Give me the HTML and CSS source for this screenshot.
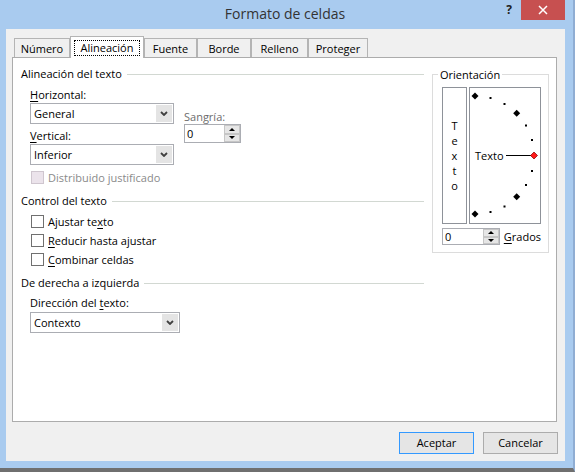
FILE: index.html
```html
<!DOCTYPE html>
<html lang="es">
<head>
<meta charset="utf-8">
<title>Formato de celdas</title>
<link rel="stylesheet" href="styles.css">
</head>
<body>
<div class="window">
  <div class="titlebar">
    <div class="title">Formato de celdas</div>
    <div class="controls">
      <div class="help">?</div>
      <div class="close"><svg width="10" height="10" viewBox="0 0 10 10"><path d="M1 1L9 9M9 1L1 9" stroke="#fff" stroke-width="1.5" fill="none"/></svg></div>
    </div>
  </div>
  <div class="frame">
    <div class="client">
      <div class="tabs">
        <div class="tab tab-numero">Número</div>
        <div class="tab tab-alin active"><span class="focus">Alineación</span></div>
        <div class="tab tab-fuente">Fuente</div>
        <div class="tab tab-borde">Borde</div>
        <div class="tab tab-relleno">Relleno</div>
        <div class="tab tab-proteger">Proteger</div>
      </div>
      <div class="panel">
        <div class="left">
          <div class="group-head">Alineación del texto</div>
          <div class="align-row">
            <div class="align-col">
              <div class="label"><u>H</u>orizontal:</div>
              <div class="select select-md">
                <span class="select-value">General</span>
                <span class="select-btn"><svg width="8" height="5" viewBox="0 0 8 5"><path d="M1 1L4 4L7 1" stroke="#404040" stroke-width="1.8" fill="none"/></svg></span>
              </div>
              <div class="label label-gap"><u>V</u>ertical:</div>
              <div class="select select-md">
                <span class="select-value">Inferior</span>
                <span class="select-btn"><svg width="8" height="5" viewBox="0 0 8 5"><path d="M1 1L4 4L7 1" stroke="#404040" stroke-width="1.8" fill="none"/></svg></span>
              </div>
            </div>
            <div class="indent-col">
              <div class="label muted">Sangría:</div>
              <div class="spin spin-indent">
                <span class="spin-value">0</span>
                <span class="spin-btns"><span class="spin-up"></span><span class="spin-down"></span></span>
              </div>
            </div>
          </div>
          <div class="check check-disabled"><span class="cb disabled"></span><span class="disabled-text">Distribuido justificado</span></div>

          <div class="group-head group-gap">Control del texto</div>
          <div class="check-list">
            <div class="check"><span class="cb"></span><span>Ajustar te<u>x</u>to</span></div>
            <div class="check"><span class="cb"></span><span><u>R</u>educir hasta ajustar</span></div>
            <div class="check"><span class="cb"></span><span><u>C</u>ombinar celdas</span></div>
          </div>

          <div class="group-head group-gap2">De derecha a izquierda</div>
          <div class="label label-dir">Dirección del <u>t</u>exto:</div>
          <div class="select select-lg">
            <span class="select-value">Contexto</span>
            <span class="select-btn"><svg width="8" height="5" viewBox="0 0 8 5"><path d="M1 1L4 4L7 1" stroke="#404040" stroke-width="1.8" fill="none"/></svg></span>
          </div>
        </div>

        <div class="right">
          <div class="orient">
            <span class="legend">Orientación</span>
            <div class="orient-boxes">
              <div class="vtext"><span class="vword">Texto</span></div>
              <div class="dial">
                <svg class="dial-svg" width="70" height="135" viewBox="0 0 70 135">
                  <path d="M5 4.5L8.5 8L5 11.5L1.5 8Z" fill="#000"/>
                  <rect x="19.5" y="9" width="2" height="2" fill="#000"/>
                  <rect x="33.5" y="15" width="2" height="2" fill="#000"/>
                  <path d="M46.7 21.8L50.2 25.3L46.7 28.8L43.2 25.3Z" fill="#000"/>
                  <rect x="55" y="36.5" width="2" height="2" fill="#000"/>
                  <rect x="61" y="51" width="2" height="2" fill="#000"/>
                  <line x1="36" y1="67.5" x2="61" y2="67.5" stroke="#000" stroke-width="1"/>
                  <path d="M64 64L67.5 67.5L64 71L60.5 67.5Z" fill="#ff1a1a" stroke="#800000" stroke-width="0.7"/>
                  <rect x="61" y="82" width="2" height="2" fill="#000"/>
                  <rect x="55" y="96" width="2" height="2" fill="#000"/>
                  <path d="M46.7 105.2L50.2 108.7L46.7 112.2L43.2 108.7Z" fill="#000"/>
                  <rect x="33.5" y="117.5" width="2" height="2" fill="#000"/>
                  <rect x="19.5" y="123" width="2" height="2" fill="#000"/>
                  <path d="M5 122.5L8.5 126L5 129.5L1.5 126Z" fill="#000"/>
                  <text class="dial-text" x="5" y="72">Texto</text>
                </svg>
              </div>
            </div>
            <div class="orient-spin-row">
              <div class="spin spin-deg">
                <span class="spin-value">0</span>
                <span class="spin-btns"><span class="spin-up"></span><span class="spin-down"></span></span>
              </div>
              <span><u>G</u>rados</span>
            </div>
          </div>
        </div>
      </div>
      <div class="buttons">
        <div class="btn default">Aceptar</div>
        <div class="btn">Cancelar</div>
      </div>
    </div>
  </div>
</div>
</body>
</html>
```

FILE: styles.css
```css
* { box-sizing: border-box; }
html, body { margin: 0; padding: 0; }
body {
  background: #a9cbef;
  font-family: "Open Sans", "Liberation Sans", Arial, sans-serif;
  font-size: 11px;
  color: #000;
}
u { text-decoration: underline; text-underline-offset: 2px; }

.window {
  width: 575px;
  height: 472px;
  display: flex;
  flex-direction: column;
  background: #a9cbef;
  border-right: 2px solid #8fadd3;
  border-bottom: 4px solid #6f6f6f;
}

/* Title bar */
.titlebar {
  flex: none;
  height: 29px;
  display: grid;
  grid-template-columns: 1fr auto 1fr;
}
.title {
  grid-column: 2;
  font-size: 14px;
  line-height: 20px;
  padding-top: 4px;
  padding-right: 3px;
  color: #333;
}
.controls {
  grid-column: 3;
  display: flex;
  justify-content: flex-end;
  align-items: flex-start;
  padding-right: 8px;
}
.help {
  width: 16px;
  margin-right: 4px;
  line-height: 20px;
  text-align: center;
  font-weight: bold;
  font-size: 12px;
  color: #222;
}
.close {
  width: 44px;
  height: 20px;
  background: #c75050;
  display: flex;
  align-items: center;
  justify-content: center;
}

/* Frame / client */
.frame {
  flex: 1;
  display: flex;
  padding: 0 8px 7px 6px;
}
.client {
  flex: 1;
  display: flex;
  flex-direction: column;
  background: #f0f0f0;
  padding: 7px 8px 7px 6px;
}

/* Tabs */
.tabs {
  flex: none;
  height: 21px;
  display: flex;
  align-items: flex-end;
  padding-left: 2px;
}
.tab {
  height: 19px;
  border: 1px solid #b4b4b4;
  border-bottom: none;
  background: #f0f0f0;
  text-align: center;
  line-height: 17px;
  padding-top: 1px;
}
.tab.active {
  height: 22px;
  margin-bottom: -1px;
  background: #fff;
  padding: 3px 3px 2px;
  position: relative;
  z-index: 1;
}
.focus {
  display: block;
  height: 16px;
  border: 1px dotted #000;
  line-height: 14px;
}
.tab-numero { width: 56px; }
.tab-alin { width: 74px; }
.tab-fuente { width: 53px; }
.tab-borde { width: 54px; }
.tab-relleno { width: 57px; }
.tab-proteger { width: 60px; }

/* Panel */
.panel {
  flex: 1;
  background: #fff;
  border: 1px solid #acacac;
  display: grid;
  grid-template-columns: 1fr 117px;
  column-gap: 8px;
  align-items: start;
  padding: 9px 7px 0 8px;
}
.left {
  display: flex;
  flex-direction: column;
}
.group-head {
  display: flex;
  align-items: center;
  gap: 5px;
  height: 14px;
  line-height: 14px;
  white-space: nowrap;
}
.group-head::after {
  content: "";
  flex: 1;
  height: 1px;
  background: #d2d8d2;
}
.group-gap { margin-top: 9px; }
.group-gap2 { margin-top: 7px; }

.label { line-height: 15px; }
.label-gap { margin-top: 4px; }
.label-dir { margin-top: 5px; padding-left: 9px; }
.muted { color: #6d6d6d; }

.align-row {
  display: flex;
  gap: 10px;
  margin-top: 6px;
  padding-left: 9px;
}
.align-col {
  width: 144px;
  display: flex;
  flex-direction: column;
}
.indent-col {
  margin-top: 22px;
  display: flex;
  flex-direction: column;
}

/* Select */
.select {
  display: flex;
  height: 21px;
  border: 1px solid #abadb3;
  background: #fff;
  margin-top: 1px;
}
.select-md { width: 144px; }
.select-lg { width: 150px; margin-top: 2px; margin-left: 9px; }
.select-value {
  flex: 1;
  padding-left: 3px;
  line-height: 19px;
}
.select-btn {
  width: 16px;
  margin: 1px 1px 1px 0;
  background: #e4e4e4;
  display: flex;
  align-items: center;
  justify-content: center;
}

/* Spin */
.spin {
  display: flex;
  border: 1px solid #abadb3;
  background: #fff;
}
.spin-indent { width: 57px; height: 19px; }
.spin-deg { width: 58px; height: 17px; }
.spin-value {
  flex: 1;
  padding-left: 2px;
  line-height: 17px;
}
.spin-deg .spin-value { line-height: 15px; }
.spin-btns {
  width: 16px;
  display: flex;
  flex-direction: column;
}
.spin-up, .spin-down {
  flex: 1;
  background: #e6e6e6;
  border: 1px solid #c6c6c6;
  display: flex;
  align-items: center;
  justify-content: center;
}
.spin-up::before {
  content: "";
  border-left: 3px solid transparent;
  border-right: 3px solid transparent;
  border-bottom: 3px solid #000;
}
.spin-down::before {
  content: "";
  border-left: 3px solid transparent;
  border-right: 3px solid transparent;
  border-top: 3px solid #000;
}

/* Checkboxes */
.check {
  display: flex;
  align-items: center;
  gap: 4px;
  height: 19px;
  padding-left: 10px;
}
.check-disabled { height: 16px; margin-top: 4px; }
.check-list { margin-top: 4px; }
.cb {
  flex: none;
  width: 13px;
  height: 13px;
  border: 1px solid #707070;
  background: #fff;
}
.cb.disabled {
  border-color: #cfc6cf;
  background: #ebe3eb;
}
.disabled-text { color: #8a8a8a; }

/* Orientation */
.orient {
  position: relative;
  margin-top: 7px;
  border: 1px solid #dcdcdc;
  padding: 12px 7px 7px 9px;
}
.legend {
  position: absolute;
  top: -8px;
  left: 5px;
  padding: 0 2px;
  line-height: 15px;
  background: #fff;
}
.orient-boxes {
  display: flex;
  gap: 2px;
}
.vtext {
  width: 25px;
  height: 137px;
  border: 1px solid #8e9299;
  display: flex;
  align-items: center;
  justify-content: center;
}
.vword {
  writing-mode: vertical-lr;
  text-orientation: upright;
  letter-spacing: 0;
  line-height: 13px;
}
.dial {
  width: 72px;
  height: 137px;
  border: 1px solid #8e9299;
}
.dial-svg { display: block; }
.dial-text {
  font-family: "Open Sans", "Liberation Sans", Arial, sans-serif;
  font-size: 11px;
  fill: #000;
}
.orient-spin-row {
  display: flex;
  align-items: center;
  gap: 4px;
  margin-top: 4px;
}

/* Buttons */
.buttons {
  flex: none;
  display: flex;
  justify-content: flex-end;
  gap: 9px;
  margin-top: 10px;
  margin-right: -1px;
}
.btn {
  width: 75px;
  height: 22px;
  border: 1px solid #acacac;
  background: #e5e5e5;
  text-align: center;
  line-height: 20px;
}
.btn.default { border-color: #3399ff; }
```
